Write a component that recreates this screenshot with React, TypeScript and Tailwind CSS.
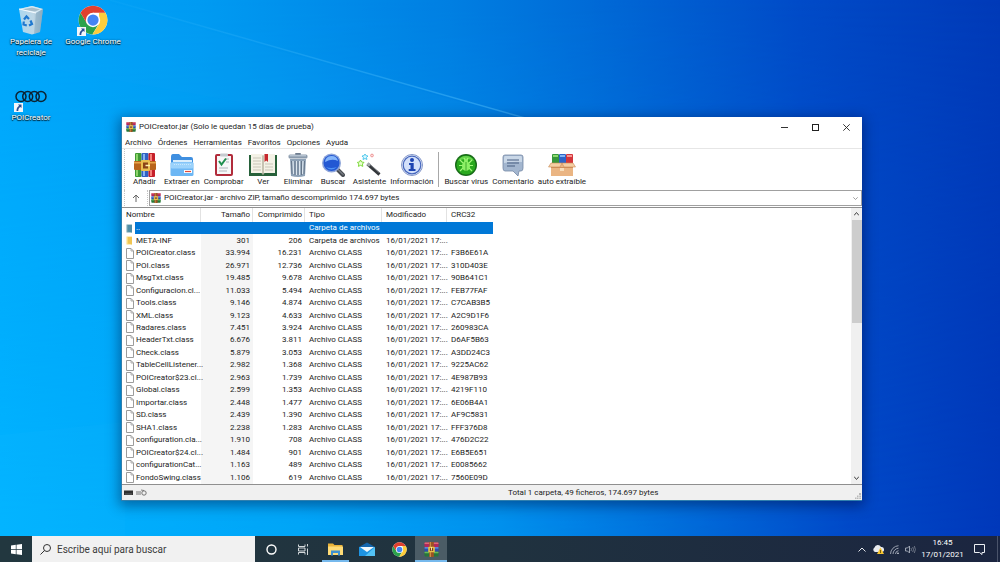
import type { ReactNode } from "react";

type Entry = {
  name: string;
  size: string;
  packed: string;
  kind: "folder" | "file";
  crc: string;
};

const file = (name: string, size: string, packed: string, crc: string): Entry => ({
  name,
  size,
  packed,
  kind: "file",
  crc,
});

const entries: Entry[] = [
  { name: "META-INF", size: "301", packed: "206", kind: "folder", crc: "" },
  file("POICreator.class", "33.994", "16.231", "F3B6E61A"),
  file("POI.class", "26.971", "12.736", "310D403E"),
  file("MsgTxt.class", "19.485", "9.678", "90B641C1"),
  file("Configuracion.cl...", "11.033", "5.494", "FEB77FAF"),
  file("Tools.class", "9.146", "4.874", "C7CAB3B5"),
  file("XML.class", "9.123", "4.633", "A2C9D1F6"),
  file("Radares.class", "7.451", "3.924", "260983CA"),
  file("HeaderTxt.class", "6.676", "3.811", "D6AF5B63"),
  file("Check.class", "5.879", "3.053", "A3DD24C3"),
  file("TableCellListener...", "2.982", "1.368", "9225AC62"),
  file("POICreator$23.cl...", "2.963", "1.739", "4E987B93"),
  file("Global.class", "2.599", "1.353", "4219F110"),
  file("Importar.class", "2.448", "1.477", "6E06B4A1"),
  file("SD.class", "2.439", "1.390", "AF9C5831"),
  file("SHA1.class", "2.238", "1.283", "FFF376D8"),
  file("configuration.cla...", "1.910", "708", "476D2C22"),
  file("POICreator$24.cl...", "1.484", "901", "E6B5E651"),
  file("configurationCat...", "1.163", "489", "E0085662"),
  file("FondoSwing.class", "1.106", "619", "7560E09D"),
];

function Wallpaper() {
  return (
    <svg className="absolute inset-0 size-full" viewBox="0 0 1000 562" preserveAspectRatio="none" aria-hidden="true">
      <defs>
        <linearGradient id="sky" x1="0" y1="0" x2="1" y2="0">
          <stop offset="0" stopColor="#00a6fb" />
          <stop offset="0.2" stopColor="#009bf2" />
          <stop offset="0.45" stopColor="#007fe2" />
          <stop offset="0.63" stopColor="#0065d4" />
          <stop offset="0.8" stopColor="#004bc8" />
          <stop offset="1" stopColor="#003ab8" />
        </linearGradient>
        <linearGradient id="floor" x1="0" y1="0" x2="1" y2="0">
          <stop offset="0" stopColor="#00b4ff" />
          <stop offset="0.3" stopColor="#00a6f8" />
          <stop offset="0.5" stopColor="#0092ee" />
          <stop offset="0.68" stopColor="#006edb" />
          <stop offset="0.85" stopColor="#0049c8" />
          <stop offset="1" stopColor="#0038ba" />
        </linearGradient>
        <linearGradient id="fade" x1="0" y1="0" x2="0" y2="1">
          <stop offset="0" stopColor="#000" />
          <stop offset="1" stopColor="#fff" />
        </linearGradient>
        <mask id="low">
          <rect width="1000" height="562" fill="url(#fade)" />
        </mask>
        <linearGradient id="beam" x1="0" y1="0" x2="1" y2="0">
          <stop offset="0" stopColor="#5cc8ff" stopOpacity="0.05" />
          <stop offset="1" stopColor="#5cc8ff" stopOpacity="0.45" />
        </linearGradient>
      </defs>
      <rect width="1000" height="562" fill="url(#sky)" />
      <rect width="1000" height="562" fill="url(#floor)" mask="url(#low)" />
      <path d="M100 0 L560 130 L400 130 L0 60 V0Z" fill="#20b0ff" opacity="0.06" />
      <path d="M110 0 L525 118" stroke="url(#beam)" strokeWidth="1.5" fill="none" />
      <path d="M0 435 L125 422 V562 H0Z" fill="#20c0ff" opacity="0.08" />
    </svg>
  );
}

function ChromeLogo({ className }: { className: string }) {
  return (
    <svg className={className} viewBox="0 0 48 48" aria-hidden="true">
      <circle cx="24" cy="24" r="23" fill="#fff" />
      <path d="M4.1 12.5 A23 23 0 0 0 23 47 L33.5 29.5 L14.5 29.5Z" fill="#2ba24c" />
      <path d="M43.9 12.5 A23 23 0 0 1 23 47 L34 29.5 L33.5 12.5Z" fill="#fdcd3c" />
      <path d="M4.1 12.5 A23 23 0 0 1 43.9 12.5 H24 L14.5 30Z" fill="#e0402f" />
      <circle cx="24" cy="24" r="11.5" fill="#fff" />
      <circle cx="24" cy="24" r="9" fill="#4484f3" />
    </svg>
  );
}

/** Three stacked books held by a vertical belt. */
function RarLogo({ className }: { className: string }) {
  return (
    <svg className={className} viewBox="0 0 32 32" aria-hidden="true">
      <rect x="1" y="1" width="30" height="10" rx="2" fill="#b3265c" />
      <rect x="1" y="1" width="30" height="3" rx="1" fill="#df6a75" />
      <rect x="1" y="11" width="30" height="10" rx="2" fill="#2a4fb0" />
      <rect x="1" y="11" width="30" height="3" rx="1" fill="#6d9ae6" />
      <rect x="1" y="21" width="30" height="10" rx="2" fill="#27763a" />
      <rect x="1" y="21" width="30" height="3" rx="1" fill="#67ba57" />
      <rect x="11" y="0" width="10" height="32" fill="#9c5423" />
      <rect x="12.5" y="0" width="2" height="32" fill="#d89a4c" />
      <rect x="9" y="10" width="14" height="12" rx="2" fill="#e8c04a" />
      <rect x="12.5" y="13" width="7" height="6" fill="#7a3a1c" />
      <rect x="15" y="11" width="2" height="7" fill="#fff3b0" />
    </svg>
  );
}

function ShortcutBadge() {
  return (
    <svg className="absolute -left-px bottom-0 size-[9px]" viewBox="0 0 9 9" aria-hidden="true">
      <rect width="9" height="9" fill="#f3f6fa" />
      <path d="M4 1.5 H7.5 V5 L6.3 3.9 C4.7 5 4.3 6 4.3 8 H2.5 C2.4 5.4 3.4 4 5.1 2.8Z" fill="#2c4f94" />
    </svg>
  );
}

function RecycleBin() {
  return (
    <svg className="h-[30px] w-[26px]" viewBox="0 0 26 30" aria-hidden="true">
      <defs>
        <linearGradient id="bin" x1="0" y1="0" x2="1" y2="0">
          <stop offset="0" stopColor="#a9d8f0" />
          <stop offset="0.6" stopColor="#bdd6e5" />
          <stop offset="1" stopColor="#8fb0c4" />
        </linearGradient>
      </defs>
      <path d="M1 4 L14 1 L25 4 L22 27 L14 29.5 L5 27Z" fill="url(#bin)" />
      <path d="M1 4 L14 1 L25 4 L18 8Z" fill="#d3e8f3" />
      <path d="M4 4.5 L14 2.5 L22 4.5 L17 6.5Z" fill="#a7bdca" />
      <path d="M18 8 L25 4 L22 27 L16 29Z" fill="#86a9bf" opacity="0.55" />
      <path d="M1 4 L18 8" stroke="#f5fbff" strokeWidth="1" />
      <g fill="none" stroke="#1f78cf" strokeWidth="2.2">
        <path d="M6 14.5 L8.5 11.5 L11 14" />
        <path d="M12.5 15.5 L14 19 L11 20.5" />
        <path d="M8.8 20.5 L5.5 19.5 L5.8 16.5" />
      </g>
    </svg>
  );
}

function Rings() {
  return (
    <svg className="h-[13px] w-[32px]" viewBox="0 0 32 13" aria-hidden="true">
      <g fill="none" stroke="#0b2434" strokeWidth="1.5">
        <circle cx="6" cy="6.5" r="5" />
        <circle cx="12.7" cy="6.5" r="5" />
        <circle cx="19.3" cy="6.5" r="5" />
        <circle cx="26" cy="6.5" r="5" />
      </g>
    </svg>
  );
}

function DesktopIcon({ label, children }: { label: string; children: ReactNode }) {
  return (
    <button
      type="button"
      className="flex w-[62px] flex-col items-center text-center text-[8px] leading-[11px] text-white [text-shadow:0_1px_1px_#000,0_0_2px_#000a]"
    >
      <span className="relative flex h-[32px] items-center justify-center">{children}</span>
      <span>{label}</span>
    </button>
  );
}

function ToolIcon({ children }: { children: ReactNode }) {
  return (
    <svg className="size-6" viewBox="0 0 24 24" aria-hidden="true">
      {children}
    </svg>
  );
}

const mainTools: { label: string; icon: ReactNode }[] = [
  {
    label: "Añadir",
    icon: (
      <ToolIcon>
        <rect x="2" y="0" width="6.5" height="24" rx="1" fill="#3f9a34" />
        <rect x="3" y="1" width="2" height="22" fill="#8cd46a" />
        <rect x="8.5" y="0" width="7" height="24" rx="1" fill="#2f62c4" />
        <rect x="10" y="1" width="2" height="22" fill="#84b2f2" />
        <rect x="15.5" y="0" width="6.5" height="24" rx="1" fill="#c5202a" />
        <rect x="17" y="1" width="2" height="22" fill="#f4807a" />
        <rect x="1" y="8" width="22" height="9" rx="1" fill="#b8641b" />
        <rect x="1" y="9" width="22" height="1.5" fill="#e9a64b" />
        <rect x="8" y="7" width="9" height="11" rx="1" fill="#e9c050" />
        <rect x="10" y="9.5" width="5" height="6" fill="#8a4316" />
        <path d="M12.5 12.5 H17" stroke="#fff1ad" strokeWidth="1.5" />
      </ToolIcon>
    ),
  },
  {
    label: "Extraer en",
    icon: (
      <ToolIcon>
        <path d="M1 4 Q1 1 3 1 H9 L12 4 H21 Q23 4 23 6 V12 H1Z" fill="#3f8fe0" />
        <path d="M3 7 H22 V12 H3Z" fill="#d9edfc" />
        <rect x="0.5" y="9" width="23" height="14" rx="1.5" fill="#6db7f4" />
        <rect x="1" y="9.5" width="22" height="6" rx="1" fill="#9bd2fb" />
        <path d="M4 11.5 H21" stroke="#c8e7fd" strokeDasharray="1 1" />
        <path d="M14 17 H22 V20 H14Z" fill="#fff" />
        <path d="M15 18.5 H21" stroke="#e04a3a" strokeWidth="1.2" />
      </ToolIcon>
    ),
  },
  {
    label: "Comprobar",
    icon: (
      <ToolIcon>
        <rect x="3" y="1" width="18" height="22" rx="2" fill="#b12c3b" />
        <rect x="5" y="3" width="14" height="18" fill="#f7f8f8" />
        <rect x="8" y="0.5" width="8" height="3" rx="1" fill="#c5cbd0" />
        <path d="M14 6 H17 M14 9 H17 M7 15 H16 M7 18 H15" stroke="#b0b6bb" />
        <path d="M7 8 L9.5 11.5 L14 5.5" stroke="#1f8f4e" strokeWidth="2" fill="none" />
      </ToolIcon>
    ),
  },
  {
    label: "Ver",
    icon: (
      <svg className="h-6 w-[28px]" viewBox="0 0 28 24" aria-hidden="true">
        <path d="M0 2 H28 V23 H0Z" fill="#27613a" />
        <path d="M2 1 H12 Q14 1 14 3 Q14 1 16 1 H26 V20 H16 Q14 20 14 22 Q14 20 12 20 H2Z" fill="#f4f2e6" />
        <path d="M14 3 V22" stroke="#99947f" />
        <path d="M4 5 H12 M4 8 H12 M4 11 H12 M4 14 H12 M4 17 H12 M16 11 H24 M16 14 H24 M16 17 H24" stroke="#c9c6b8" />
        <path d="M15.5 1 H19 V9 L17.2 7.5 L15.5 9Z" fill="#c6272d" />
      </svg>
    ),
  },
  {
    label: "Eliminar",
    icon: (
      <ToolIcon>
        <rect x="9" y="0" width="6" height="2" rx="1" fill="#6f7d8f" />
        <rect x="2.5" y="1.5" width="19" height="4" rx="1.5" fill="#8b9bad" />
        <path d="M4 6 H20 L19 23 Q12 25 5 23Z" fill="#8da1b6" />
        <path d="M7 8 L7.5 21 M10.5 8 V22 M13.5 8 V22 M17 8 L16.5 21" stroke="#dce6ef" strokeWidth="1.3" />
        <path d="M5.5 8 L6 21 M9 8 V22 M12 8 V22 M15.5 8 V22 M18.5 8 L18 21" stroke="#59697d" strokeWidth="0.8" />
        <path d="M3.5 2.8 H20" stroke="#c9d5e0" />
      </ToolIcon>
    ),
  },
  {
    label: "Buscar",
    icon: (
      <ToolIcon>
        <path d="M16 16 L22 22" stroke="#4a4e54" strokeWidth="4" strokeLinecap="round" />
        <path d="M16 15.5 L22 21.5" stroke="#989ea6" strokeLinecap="round" />
        <circle cx="10.5" cy="10" r="9.5" fill="#8ea5d9" />
        <circle cx="10.5" cy="10" r="8" fill="#2358d3" />
        <path d="M4 9 A6.6 6.6 0 0 1 17 8 Q11 5 4 9Z" fill="#85b6fb" />
        <path d="M5 14 Q10 19 16 14 Q10 16 5 14Z" fill="#4f93f3" />
      </ToolIcon>
    ),
  },
  {
    label: "Asistente",
    icon: (
      <ToolIcon>
        <path d="M10.5 11 L22.5 21.5" stroke="#34373b" strokeWidth="3" />
        <path d="M10.5 10.5 L13 12.7" stroke="#a6aaae" strokeWidth="3" />
        <path d="M13 11.5 L22 19.5" stroke="#8a8e93" strokeWidth="0.7" />
        <path d="M3.5 7 L4.7 9 L7 9.4 L5.4 11 L5.8 13.4 L3.6 12.3 L1.4 13.4 L1.8 11 L0.3 9.4 L2.5 9Z" fill="#e9ffd0" stroke="#75d62f" strokeWidth="0.9" />
        <path d="M8 1 L9 2.7 L11 3 L9.5 4.5 L9.9 6.5 L8 5.5 L6 6.5 L6.4 4.5 L5 3 L7 2.7Z" fill="#d8f7ff" stroke="#43c3ea" strokeWidth="0.9" />
        <circle cx="15" cy="2.5" r="1.4" fill="#ffe0e0" stroke="#e88787" strokeWidth="0.8" />
      </ToolIcon>
    ),
  },
  {
    label: "Información",
    icon: (
      <ToolIcon>
        <circle cx="12" cy="12" r="10.5" fill="#e9effb" stroke="#8497c9" strokeWidth="1" />
        <circle cx="12" cy="12" r="8.8" fill="#d3e0fa" stroke="#4566bd" strokeWidth="1.2" />
        <circle cx="12" cy="7" r="2" fill="#1d44b2" />
        <path d="M9 10 H13.7 V16 H15.5 V18 H8.7 V16 H10.5 V12 H9Z" fill="#1d44b2" />
      </ToolIcon>
    ),
  },
];

const extraTools: { label: string; icon: ReactNode }[] = [
  {
    label: "Buscar virus",
    icon: (
      <ToolIcon>
        <circle cx="12" cy="12" r="11" fill="#186b18" />
        <circle cx="12" cy="12" r="9.6" fill="#2aa91e" />
        <path d="M4 8 A9 9 0 0 1 20 8 Q12 4 4 8Z" fill="#67d44d" />
        <path d="M6 7 L9 10 M18 7 L15 10 M5 12.5 H19 M6 18 L9 15 M18 18 L15 15 M10 5 L11 7 M14 5 L13 7" stroke="#a4f87b" strokeWidth="1.2" />
        <ellipse cx="12" cy="13" rx="4" ry="5" fill="#8df066" />
        <circle cx="12" cy="7.8" r="2" fill="#8df066" />
        <path d="M12 9 V18" stroke="#2c9a20" strokeWidth="0.8" />
      </ToolIcon>
    ),
  },
  {
    label: "Comentario",
    icon: (
      <ToolIcon>
        <path d="M4 2 H20 Q22 2 22 4 V15 Q22 18 20 18 H18 L17 23 L12 18 H4 Q2 18 2 15 V4 Q2 2 4 2Z" fill="#a3b6cf" stroke="#7588a5" strokeWidth="0.8" />
        <path d="M4 3 H20 Q21 3 21 5 V9 Q12 8 3 10 V5 Q3 3 4 3Z" fill="#c9d7e7" />
        <path d="M6 7 H18 M6 10 H18 M6 13 H14" stroke="#485f82" strokeWidth="1.2" />
      </ToolIcon>
    ),
  },
  {
    label: "auto extraíble",
    icon: (
      <svg className="h-6 w-[28px]" viewBox="0 0 28 24" aria-hidden="true">
        <rect x="4" y="1" width="7" height="10" rx="1" fill="#36963b" />
        <rect x="11" y="1" width="7" height="10" rx="1" fill="#2d63c8" />
        <rect x="18" y="1" width="7" height="10" rx="1" fill="#d3353b" />
        <path d="M5 3 H10" stroke="#8dda70" strokeWidth="2" />
        <path d="M12 3 H17" stroke="#82b4f3" strokeWidth="2" />
        <path d="M19 3 H24" stroke="#f69791" strokeWidth="2" />
        <path d="M3 10 H25 V23 H3Z" fill="#eab583" />
        <path d="M3 10 L0.5 14 H12 L14 10Z M25 10 L27.5 14 H16 L14 10Z" fill="#f5cfa3" stroke="#c98b57" strokeWidth="0.6" />
        <path d="M3 14.5 H25" stroke="#c88750" strokeWidth="0.8" />
        <rect x="12" y="15" width="4" height="3" fill="#f7deba" />
      </svg>
    ),
  },
];

function ToolButton({ label, icon }: { label: string; icon: ReactNode }) {
  return (
    <button type="button" className="flex min-w-[35px] flex-col items-center px-[2px] whitespace-nowrap">
      {icon}
      <span className="leading-[10px]">{label}</span>
    </button>
  );
}

function EntryIcon({ kind }: { kind: "folder" | "file" | "up" }) {
  if (kind === "file") {
    return (
      <svg className="h-[11px] w-2 shrink-0" viewBox="0 0 8 11" aria-hidden="true">
        <path d="M0.5 0.5 H5 L7.5 3 V10.5 H0.5Z" fill="#fff" stroke="#9c9c9c" />
        <path d="M5 0.5 V3 H7.5" fill="none" stroke="#9c9c9c" strokeWidth="0.8" />
      </svg>
    );
  }
  return (
    <svg className="h-[11px] w-2 shrink-0" viewBox="0 0 8 11" aria-hidden="true">
      <path d="M0.5 1.5 H6 V9.5 H0.5Z" fill={kind === "up" ? "#6d9fae" : "#fbdc7c"} />
      <path d="M2 2 H6 V9.5 L2 8.5Z" fill={kind === "up" ? "#4f8ea8" : "#f0c552"} />
    </svg>
  );
}

function FileTable() {
  const cell = "whitespace-nowrap p-0 pl-[4px] text-left font-normal";
  const num = "p-0 pr-[3px] text-right font-normal";
  return (
    <table className="h-full w-[371px] table-fixed border-collapse">
      <colgroup>
        <col className="w-[79px]" />
        <col className="w-[52px]" />
        <col className="w-[52px]" />
        <col className="w-[77px]" />
        <col className="w-[65px]" />
        <col className="w-[46px]" />
      </colgroup>
      <thead>
        <tr className="h-[14px] [&>th:not(:last-child)]:shadow-[inset_-1px_0_#e2e2e2]">
          <th scope="col" className={cell}>Nombre</th>
          <th scope="col" className={num}>Tamaño</th>
          <th scope="col" className={num}>Comprimido</th>
          <th scope="col" className={cell}>Tipo</th>
          <th scope="col" className={cell}>Modificado</th>
          <th scope="col" className={cell}>CRC32</th>
        </tr>
      </thead>
      <tbody>
        <tr className="bg-[linear-gradient(to_right,#fff_13px,#0078d7_13px)] text-white">
          <td className={cell}>
            <span className="flex items-center gap-[2px]">
              <EntryIcon kind="up" />
              ..
            </span>
          </td>
          <td />
          <td />
          <td className={cell}>Carpeta de archivos</td>
          <td />
          <td />
        </tr>
        {entries.map((e) => (
          <tr key={e.name}>
            <td className={cell}>
              <span className="flex items-center gap-[2px]">
                <EntryIcon kind={e.kind} />
                {e.name}
              </span>
            </td>
            <td className={`${num} bg-[#f5f5f5]`}>{e.size}</td>
            <td className={num}>{e.packed}</td>
            <td className={cell}>{e.kind === "folder" ? "Carpeta de archivos" : "Archivo CLASS"}</td>
            <td className={cell}>16/01/2021 17:...</td>
            <td className={cell}>{e.crc}</td>
          </tr>
        ))}
      </tbody>
    </table>
  );
}

function Grip() {
  return <span className="w-0 self-stretch border-l border-dotted border-[#c4c4c4]" />;
}

function ArchiveWindow() {
  return (
    <section
      aria-label="POICreator.jar"
      className="absolute top-[117px] left-[121px] flex h-[384px] w-[741px] flex-col border-b border-l border-[#2f7fae] bg-white text-[8px] leading-[10px] text-[#1c1c1c] shadow-[0_3px_12px_2px_rgba(0,0,40,0.4)]"
    >
      <header className="flex h-5 shrink-0 items-center pl-1">
        <RarLogo className="mr-[3px] size-[10px]" />
        <h1 className="grow">POICreator.jar (Solo le quedan 15 días de prueba)</h1>
        <button type="button" aria-label="Minimizar" className="flex h-full w-[31px] items-center justify-center">
          <svg className="size-[7px]" viewBox="0 0 7 7"><path d="M0 3.5 H7" stroke="#333" /></svg>
        </button>
        <button type="button" aria-label="Maximizar" className="flex h-full w-[31px] items-center justify-center">
          <svg className="size-[7px]" viewBox="0 0 7 7"><rect x="0.5" y="0.5" width="6" height="6" fill="none" stroke="#222" /></svg>
        </button>
        <button type="button" aria-label="Cerrar" className="flex h-full w-[31px] items-center justify-center">
          <svg className="size-[7px]" viewBox="0 0 7 7"><path d="M0.3 0.3 L6.7 6.7 M6.7 0.3 L0.3 6.7" stroke="#222" strokeWidth="0.9" /></svg>
        </button>
      </header>
      <nav aria-label="Menú" className="flex h-[11px] shrink-0 items-center gap-[6px] pl-[3px]">
        {["Archivo", "Órdenes", "Herramientas", "Favoritos", "Opciones", "Ayuda"].map((m) => (
          <button type="button" key={m}>{m}</button>
        ))}
      </nav>
      <div role="toolbar" aria-label="Herramientas" className="flex h-[42px] shrink-0 items-center border-t border-[#e6e6e6] pl-[2px]">
        <Grip />
        <div className="flex pl-[2px]">
          {mainTools.map((t) => <ToolButton key={t.label} {...t} />)}
        </div>
        <span className="mx-[3px] h-[35px] w-px bg-[#a8a8a8]" />
        {extraTools.map((t) => <ToolButton key={t.label} {...t} />)}
      </div>
      <div className="flex h-4 shrink-0 pl-[2px]">
        <Grip />
        <button type="button" aria-label="Subir un nivel" className="flex w-[22px] items-center justify-center">
          <svg className="size-2" viewBox="0 0 8 8"><path d="M4 8 V1 M1 4 L4 1 L7 4" fill="none" stroke="#666" /></svg>
        </button>
        <Grip />
        <div className="relative ml-px flex grow items-center border border-[#a0a0a0] pl-px">
          <RarLogo className="size-[10px]" />
          <label htmlFor="path" className="sr-only">Ruta</label>
          <select id="path" className="h-full grow appearance-none bg-transparent pl-[3px] outline-none">
            <option>POICreator.jar - archivo ZIP, tamaño descomprimido 174.697 bytes</option>
          </select>
          <svg className="pointer-events-none mr-[3px] h-[3px] w-[5px]" viewBox="0 0 5 3" aria-hidden="true">
            <path d="M0.3 0.3 L2.5 2.5 L4.7 0.3" fill="none" stroke="#888" strokeWidth="0.8" />
          </svg>
        </div>
      </div>
      <div className="mt-px flex min-h-0 grow border-y border-[#8f8f8f]">
        <div className="min-w-0 grow">
          <FileTable />
        </div>
        <div className="flex w-[11px] shrink-0 flex-col items-center bg-[#f0f0f0]" aria-hidden="true">
          <svg className="h-[12px] w-[5px]" viewBox="0 0 5 12"><path d="M0 7.5 L2.5 4.5 L5 7.5" fill="none" stroke="#444" /></svg>
          <span className="h-[103px] w-[10px] bg-[#cdcdcd]" />
          <span className="grow" />
          <svg className="h-[12px] w-[5px]" viewBox="0 0 5 12"><path d="M0 4.5 L2.5 7.5 L5 4.5" fill="none" stroke="#444" /></svg>
        </div>
      </div>
      <footer className="relative flex h-[15px] shrink-0 items-center bg-[#f0f0f0]">
        <svg className="ml-[2px] h-2 w-6" viewBox="0 0 24 8" aria-hidden="true">
          <rect x="0" y="1.5" width="9" height="4.5" fill="#303030" />
          <path d="M1 5 H8" stroke="#888" strokeWidth="0.6" />
          <path d="M12 3 H17 M12 5 H17" stroke="#666" strokeWidth="0.9" />
          <circle cx="20" cy="4" r="2.2" fill="none" stroke="#666" strokeWidth="0.9" />
          <path d="M17 1 L20 1.5" stroke="#666" strokeWidth="0.8" />
        </svg>
        <span className="grow" />
        <p className="w-[354px]">Total 1 carpeta, 49 ficheros, 174.697 bytes</p>
        <svg className="absolute right-px bottom-px size-[6px]" viewBox="0 0 6 6" aria-hidden="true">
          <path d="M4 0 H6 V2 H4Z M2 2.5 H3.5 V4 H2Z M4.3 2.5 H6 V4 H4.3Z M0 4.5 H1.5 V6 H0Z M2 4.5 H3.5 V6 H2Z M4.3 4.5 H6 V6 H4.3Z" fill="#b8b8b8" />
        </svg>
      </footer>
    </section>
  );
}

function TaskButton({ label, className, children }: { label: string; className: string; children: ReactNode }) {
  return (
    <button type="button" aria-label={label} className={`flex w-8 items-center justify-center ${className}`}>
      {children}
    </button>
  );
}

function Taskbar() {
  return (
    <footer className="relative flex h-[26px] shrink-0 bg-linear-to-r from-[#22373f] via-[#20323f] to-[#1b2540] text-white">
      <TaskButton label="Inicio" className="">
        <svg className="size-[11px]" viewBox="0 0 11 11">
          <path d="M0 1.5 L4.8 0.8 V5.2 H0Z M5.5 0.7 L11 0 V5.2 H5.5Z M0 5.9 H4.8 V10.2 L0 9.5Z M5.5 5.9 H11 V11 L5.5 10.3Z" fill="#fff" />
        </svg>
      </TaskButton>
      <div className="flex w-[223px] items-center bg-[#f1f1f1] pl-2">
        <svg className="size-[11px]" viewBox="0 0 11 11" aria-hidden="true">
          <circle cx="7" cy="4" r="3.5" fill="none" stroke="#333" />
          <path d="M4.5 6.5 L0.5 10.5" stroke="#333" />
        </svg>
        <label htmlFor="search" className="sr-only">Buscar</label>
        <input
          id="search"
          type="text"
          placeholder="Escribe aquí para buscar"
          className="h-full min-w-0 grow bg-transparent pl-[6px] text-[10px] text-[#333] outline-none placeholder:text-[#3c3c3c]"
        />
      </div>
      <TaskButton label="Cortana" className="">
        <svg className="size-[11px]" viewBox="0 0 11 11"><circle cx="5.5" cy="5.5" r="4.5" fill="none" stroke="#fff" strokeWidth="1.4" /></svg>
      </TaskButton>
      <TaskButton label="Vista de tareas" className="">
        <svg className="size-[11px]" viewBox="0 0 11 11">
          <path d="M0.5 0.5 V2.5 H7 V0.5 M0.5 10.5 V8.5 H7 V10.5 M0.5 4 H7 V7 H0.5Z M9.5 0 V2.5 M9.5 4.5 V11" fill="none" stroke="#e6eaec" strokeWidth="0.9" />
        </svg>
      </TaskButton>
      <TaskButton label="Explorador de archivos" className="bg-[linear-gradient(#76b9ed,#76b9ed)] bg-[length:27px_2px] bg-bottom bg-no-repeat">
        <svg className="h-[13px] w-[15px]" viewBox="0 0 15 13">
          <path d="M0 0.5 H5 L6.5 2 H14.5 V12 H0Z" fill="#e9b33a" />
          <path d="M0 3.5 H15 V12 H0Z" fill="#ffdc77" />
          <path d="M3 12.5 V7.5 H12 V12.5 H10 V10 H5 V12.5Z" fill="#3f91d0" />
        </svg>
      </TaskButton>
      <TaskButton label="Correo" className="">
        <svg className="h-[14px] w-[16px]" viewBox="0 0 16 14">
          <path d="M0 5 L8 0.5 L16 5 V8 H0Z" fill="#1466ad" />
          <path d="M0 5 H16 V14 H0Z" fill="#1e94e3" />
          <path d="M1 5 H15 L8 10Z" fill="#f1f7fb" />
          <path d="M16 5 L6 14 H16Z" fill="#52c2f5" />
        </svg>
      </TaskButton>
      <TaskButton label="Google Chrome" className="">
        <ChromeLogo className="size-[15px]" />
      </TaskButton>
      <TaskButton label="WinRAR" className="border-b-2 border-[#76b9ed] bg-[#4b5c66]">
        <RarLogo className="mt-[2px] size-[15px]" />
      </TaskButton>
      <span className="grow" />
      <div className="flex items-center gap-[6px]">
        <svg className="h-[5px] w-2" viewBox="0 0 8 5" aria-hidden="true"><path d="M0.5 4.5 L4 1 L7.5 4.5" fill="none" stroke="#e4e7ec" /></svg>
        <svg className="h-[9px] w-[12px]" viewBox="0 0 12 9" aria-hidden="true">
          <path d="M3 7 A2.5 2.5 0 0 1 2.5 2.5 A3.5 3.5 0 0 1 9 2 A2.5 2.5 0 0 1 10 7Z" fill="#e8ebef" />
          <path d="M8.5 2.5 L12 9 H5Z" fill="#f5c430" />
          <path d="M8.5 5 V8" stroke="#5b4300" strokeWidth="0.8" />
        </svg>
        <svg className="size-[9px]" viewBox="0 0 9 9" aria-hidden="true">
          <g fill="none" stroke="#a9b0bd" strokeWidth="0.9">
            <path d="M0.5 9 A8.5 8.5 0 0 1 8.5 0.7 M3 9 A6 6 0 0 1 8.5 3.2 M5.5 9 A3.5 3.5 0 0 1 8.5 5.7" />
          </g>
          <circle cx="8" cy="8.3" r="0.8" fill="#dde1e7" />
        </svg>
        <svg className="h-[9px] w-[11px]" viewBox="0 0 11 9" aria-hidden="true">
          <path d="M0.5 3 H2.5 L4.5 1 V8 L2.5 6 H0.5Z" fill="none" stroke="#a9b0bd" strokeWidth="0.9" />
          <path d="M6 3 Q7 4.5 6 6 M7.7 2 Q9.3 4.5 7.7 7 M9.3 1 Q11.5 4.5 9.3 8" fill="none" stroke="#7f8796" strokeWidth="0.8" />
        </svg>
        <div className="flex w-[41px] flex-col items-center text-[8px] leading-[12px] whitespace-nowrap">
          <time>16:45</time>
          <time>17/01/2021</time>
        </div>
        <button type="button" aria-label="Notificaciones" className="ml-[5px]">
          <svg className="size-[11px]" viewBox="0 0 11 11"><path d="M0.5 0.5 H10.5 V8.5 H8 V10.5 L5.5 8.5 H0.5Z" fill="none" stroke="#eceff3" /></svg>
        </button>
      </div>
      <span className="ml-[12px] w-[3px] border-l border-[#4a536a]" />
    </footer>
  );
}

export default function App() {
  return (
    <div className="relative flex h-screen flex-col overflow-hidden bg-[#0078d7] font-[Roboto,'Open_Sans',sans-serif]">
      <Wallpaper />
      <main className="relative grow">
        <div className="flex flex-col gap-[22px] pt-1">
          <div className="flex items-start">
            <DesktopIcon label="Papelera de reciclaje">
              <RecycleBin />
            </DesktopIcon>
            <DesktopIcon label="Google Chrome">
              <ChromeLogo className="size-[30px]" />
              <ShortcutBadge />
            </DesktopIcon>
          </div>
          <DesktopIcon label="POICreator">
            <span className="flex h-full items-center">
              <Rings />
            </span>
            <ShortcutBadge />
          </DesktopIcon>
        </div>
        <ArchiveWindow />
      </main>
      <Taskbar />
    </div>
  );
}
